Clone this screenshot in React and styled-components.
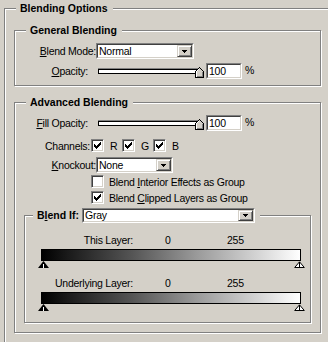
import React from 'react';
import styled, { createGlobalStyle } from 'styled-components';

const Global = createGlobalStyle`
  html, body { margin: 0; padding: 0; background: #d4d0c8; overflow: hidden; }
  body {
    width: 328px; height: 342px;
    font-family: "Liberation Sans", Arial, sans-serif;
    font-size: 10.5px; letter-spacing: -0.25px; color: #000;
  }
`;

const Group = styled.fieldset`
  margin: ${p => p.$mt || 0}px 0 0 ${p => p.$ml || 0}px;
  padding: 0;
  width: ${p => p.$w}px;
  box-sizing: border-box;
  min-inline-size: 0;
  border: 1px solid #808080;
  box-shadow: inset 1px 1px #fff, 1px 1px #fff;
`;

const Legend = styled.legend`
  margin-left: ${p => p.$ml ?? 11}px;
  padding: 0 ${p => p.$pr ?? 4}px 0 4px;
  background: #d4d0c8;
  font-weight: bold;
  letter-spacing: 0;
  line-height: 13px;
  display: flex;
  align-items: center;
  gap: 3px;
`;

const Body = styled.div`
  display: flex;
  flex-direction: column;
  padding: ${p => p.$pt || 0}px 0 ${p => p.$pb || 0}px ${p => p.$pl || 0}px;
`;

const Row = styled.div`
  display: flex;
  align-items: center;
  height: ${p => p.$h || 16}px;
  margin-top: ${p => p.$mt || 0}px;
  margin-left: ${p => p.$ml || 0}px;
`;

const Label = styled.span`
  flex: none;
  width: ${p => p.$w}px;
  text-align: right;
  white-space: nowrap;
`;

const Sunken = styled.div`
  flex: none;
  width: ${p => p.$w}px;
  height: ${p => p.$h || 16}px;
  margin-left: ${p => p.$ml || 0}px;
  box-sizing: border-box;
  border: 1px solid;
  border-color: #808080 #fff #fff #808080;
  font-weight: normal;
  letter-spacing: -0.25px;
`;

const Field = styled.div`
  height: 100%;
  box-sizing: border-box;
  border: 1px solid;
  border-color: #404040 #d4d0c8 #d4d0c8 #404040;
  background: #fff;
  display: flex;
  align-items: center;
`;

const FieldText = styled.span`
  flex: 1;
  padding-left: 1px;
  white-space: nowrap;
`;

const ArrowBtn = styled.span`
  flex: none;
  width: 15px;
  height: 100%;
  box-sizing: border-box;
  background: #d4d0c8;
  border: 1px solid;
  border-color: #d4d0c8 #404040 #404040 #d4d0c8;
  box-shadow: inset 1px 1px #fff, inset -1px -1px #808080;
  display: flex;
  align-items: center;
  justify-content: center;
`;

const Slider = styled.div`
  position: relative;
  flex: none;
  width: 106px;
  height: 16px;
  margin-left: 10px;
  display: flex;
  align-items: center;
`;

const Track = styled.div`
  width: 100px;
  height: 5px;
  box-sizing: border-box;
  border: 1px solid #000;
  background: #fff;
  box-shadow: 0 -1px #808080;
`;

const SliderThumb = styled.svg`
  position: absolute;
  left: 97px;
  top: 3px;
  display: block;
`;

const Percent = styled.span`
  margin-left: 3px;
  margin-bottom: 3px;
`;

const Box = styled.span`
  flex: none;
  width: 13px;
  height: 13px;
  box-sizing: border-box;
  border: 1px solid;
  border-color: #808080 #fff #fff #808080;
  box-shadow: inset 1px 1px #404040, inset -1px -1px #d4d0c8;
  background: #fff;
  display: block;
`;

const Channels = styled.div`
  display: flex;
  margin-left: 1px;
`;

const ChannelItem = styled.div`
  display: flex;
  align-items: center;
  gap: 6px;
  width: 31px;
`;

const CheckText = styled.span`
  margin-left: 5px;
  white-space: nowrap;
`;

const LayerRow = styled.div`
  display: flex;
  height: 13px;
  line-height: 13px;
  margin-top: ${p => p.$mt || 0}px;
`;

const LayerLabel = styled.span`
  width: 108px;
  text-align: right;
`;

const Values = styled.div`
  display: flex;
  margin-left: 32px;
`;

const Value = styled.span`
  width: 62px;
`;

const Bar = styled.div`
  width: 260px;
  height: 12px;
  box-sizing: border-box;
  margin: 2px 0 0 16px;
  border: 1px solid #000;
  background: linear-gradient(to right, #000 0%, #1a1a1a 10%, #555 35%, #9a9a9a 60%, #d8d8d8 85%, #fff 100%);
`;

const ThumbRow = styled.div`
  display: flex;
  justify-content: space-between;
  width: 267px;
  height: 7px;
  margin-left: 13px;
`;

const Arrow = () => (
  <svg width="5" height="3" viewBox="0 0 5 3" shapeRendering="crispEdges">
    <path d="M0 0h5v1H0z M1 1h3v1H1z M2 2h1v1H2z" fill="#000" />
  </svg>
);

const Select = ({ w, h, ml, children }) => (
  <Sunken $w={w} $h={h} $ml={ml}>
    <Field>
      <FieldText>{children}</FieldText>
      <ArrowBtn><Arrow /></ArrowBtn>
    </Field>
  </Sunken>
);

const NumInput = ({ children }) => (
  <Sunken $w={36} $ml={2}>
    <Field>
      <FieldText>{children}</FieldText>
    </Field>
  </Sunken>
);

const Check = ({ checked }) => (
  <Box>
    {checked && (
      <svg width="11" height="11" viewBox="0 0 11 11" shapeRendering="crispEdges" style={{ display: 'block' }}>
        <path
          fill="#000"
          d="M8 2h1v1H8z M7 3h2v1H7z M2 4h1v1H2z M6 4h3v1H6z M2 5h2v1H2z M5 5h3v1H5z M2 6h5v1H2z M3 7h3v1H3z M4 8h1v1H4z"
        />
      </svg>
    )}
  </Box>
);

const OpacitySlider = () => (
  <Slider>
    <Track />
    <SliderThumb width="9" height="12" viewBox="0 0 9 12" shapeRendering="crispEdges">
      <path d="M0.5 11.5V5.5L4.5 1.5L8.5 5.5V11.5Z" fill="#d4d0c8" stroke="#000" />
      <path d="M1.5 10.5V5.8L4.5 2.8" fill="none" stroke="#fff" />
      <path d="M7.5 6V10.5H1.5" fill="none" stroke="#808080" />
    </SliderThumb>
  </Slider>
);

const BlackThumb = () => (
  <svg width="11" height="7" viewBox="0 0 11 7">
    <path d="M5.5 0L11 7H0Z" fill="#000" />
    <path d="M5 3h1v4H5z" fill="#fff" shapeRendering="crispEdges" />
  </svg>
);

const WhiteThumb = () => (
  <svg width="11" height="7" viewBox="0 0 11 7">
    <path d="M5.5 0.8L10.3 6.5H0.7Z" fill="#fff" stroke="#000" />
    <path d="M5 1h1v6H5z" fill="#000" shapeRendering="crispEdges" />
  </svg>
);

export default function App() {
  return (
    <>
      <Global />
      <Group $w={340} $ml={4} $mt={2}>
        <Legend $ml={11} $pr={5}>Blending Options</Legend>
        <Body $pt={9} $pl={9} $pb={20}>
          <Group $w={307}>
            <Legend $pr={5}>General Blending</Legend>
            <Body $pt={6} $pb={6}>
              <Row>
                <Label $w={81}><u>B</u>lend Mode:</Label>
                <Select w={98}>Normal</Select>
              </Row>
              <Row $mt={4}>
                <Label $w={73}><u>O</u>pacity:</Label>
                <OpacitySlider />
                <NumInput>100</NumInput>
                <Percent>%</Percent>
              </Row>
            </Body>
          </Group>

          <Group $w={307} $mt={10}>
            <Legend $pr={5}>Advanced Blending</Legend>
            <Body $pt={6} $pb={9}>
              <Row>
                <Label $w={73}><u>F</u>ill Opacity:</Label>
                <OpacitySlider />
                <NumInput>100</NumInput>
                <Percent>%</Percent>
              </Row>
              <Row $h={13} $mt={8}>
                <Label $w={75}>Channels:</Label>
                <Channels>
                  <ChannelItem><Check checked /><span>R</span></ChannelItem>
                  <ChannelItem><Check checked /><span>G</span></ChannelItem>
                  <ChannelItem><Check checked /><span>B</span></ChannelItem>
                </Channels>
              </Row>
              <Row $mt={5}>
                <Label $w={81}><u>K</u>nockout:</Label>
                <Select w={77}>None</Select>
              </Row>
              <Row $h={13} $mt={2} $ml={76}>
                <Check />
                <CheckText>Blend <u>I</u>nterior Effects as Group</CheckText>
              </Row>
              <Row $h={13} $mt={3} $ml={76}>
                <Check checked />
                <CheckText>Blend <u>C</u>lipped Layers as Group</CheckText>
              </Row>

              <Group $w={287} $ml={9} $mt={4}>
                <Legend $ml={8} $pr={5}>
                  <span>B<u>l</u>end If:</span>
                  <Select w={173} h={15}>Gray</Select>
                </Legend>
                <Body $pt={11} $pb={11}>
                  <LayerRow>
                    <LayerLabel>This Layer:</LayerLabel>
                    <Values><Value>0</Value><Value>255</Value></Values>
                  </LayerRow>
                  <Bar />
                  <ThumbRow><BlackThumb /><WhiteThumb /></ThumbRow>
                  <LayerRow $mt={9}>
                    <LayerLabel>Underlying Layer:</LayerLabel>
                    <Values><Value>0</Value><Value>255</Value></Values>
                  </LayerRow>
                  <Bar />
                  <ThumbRow><BlackThumb /><WhiteThumb /></ThumbRow>
                </Body>
              </Group>
            </Body>
          </Group>
        </Body>
      </Group>
    </>
  );
}
